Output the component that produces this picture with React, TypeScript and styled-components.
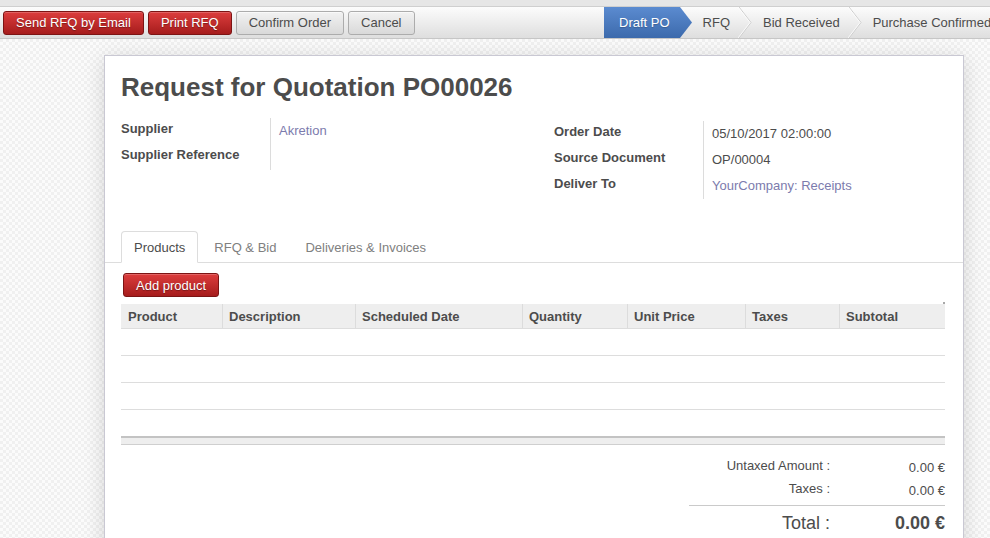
import React from "react";
import styled, { createGlobalStyle, css } from "styled-components";

const GlobalStyle = createGlobalStyle`
  html, body { margin: 0; padding: 0; }
  body {
    font-family: "Liberation Sans", Arial, sans-serif;
    font-size: 13px;
    color: #4c4c4c;
    background-color: #fbfbfb;
    background-image: conic-gradient(#f0f0f0 25%, transparent 0 50%, #f0f0f0 0 75%, transparent 0);
    background-size: 6px 6px;
    overflow: hidden;
  }
`;

const Page = styled.div`
  display: flex;
  flex-direction: column;
  width: 990px;
  height: 538px;
  overflow: hidden;
`;

const TopStrip = styled.div`
  height: 6px;
  flex-shrink: 0;
  background: #e6e6e6;
`;

const ActionBar = styled.div`
  display: flex;
  align-items: stretch;
  height: 31px;
  flex-shrink: 0;
  border-top: 1px solid #cfcfcf;
  border-bottom: 1px solid #c6c6c6;
  background: linear-gradient(#fcfcfc, #dedede);
  padding-left: 3px;
  overflow: hidden;
  white-space: nowrap;
`;

const ButtonGroup = styled.div`
  flex: 0 0 601px;
  display: flex;
  align-items: center;
  gap: 4px;
`;

const Button = styled.button<{ $primary?: boolean }>`
  height: 24px;
  padding: 0 12px;
  border-radius: 3px;
  font: 13px "Liberation Sans", Arial, sans-serif;
  cursor: pointer;
  white-space: nowrap;
  ${(p) =>
    p.$primary
      ? css`
          color: #fff;
          background: linear-gradient(#dc3d3d, #a61c1c);
          border: 1px solid #7c1414;
          text-shadow: 0 1px 1px rgba(0, 0, 0, 0.35);
          box-shadow: inset 0 1px 0 rgba(255, 255, 255, 0.2);
        `
      : css`
          color: #4c4c4c;
          background: linear-gradient(#f2f2f2, #d9d9d9);
          border: 1px solid #acacac;
          box-shadow: inset 0 1px 0 rgba(255, 255, 255, 0.6);
        `}
`;

const StatusBar = styled.div`
  display: flex;
  align-items: stretch;
  flex-shrink: 0;
  height: 31px;
`;

const ActiveStep = styled.div`
  display: flex;
  align-items: center;
  padding: 0 10px 0 15px;
  color: #fff;
  background: linear-gradient(#5b8bd0, #3c6aac);
  text-shadow: 0 1px 1px rgba(0, 0, 0, 0.2);
`;

const Step = styled.div`
  display: flex;
  align-items: center;
  padding: 0 8px 0 11px;
  color: #4c4c4c;
`;

const StepArrow = () => (
  <svg width="12" height="31" viewBox="0 0 12 31" style={{ display: "block" }}>
    <defs>
      <linearGradient id="actgrad" x1="0" y1="0" x2="0" y2="1">
        <stop offset="0" stopColor="#5b8bd0" />
        <stop offset="1" stopColor="#3c6aac" />
      </linearGradient>
    </defs>
    <polygon points="0,0 12,15.5 0,31" fill="url(#actgrad)" />
  </svg>
);

const Chevron = () => (
  <svg width="14" height="31" viewBox="0 0 14 31" style={{ display: "block" }}>
    <polyline points="1,0 13,15.5 1,31" fill="none" stroke="#cdcdcd" strokeWidth="1" />
    <polyline points="0,0 12,15.5 0,31" fill="none" stroke="#ffffff" strokeWidth="1" opacity="0.8" />
  </svg>
);

const SheetArea = styled.div`
  flex: 1;
  padding: 16px 0 0 104px;
`;

const Sheet = styled.div`
  width: 860px;
  box-sizing: border-box;
  background: #fff;
  border: 1px solid #c9c8d3;
  box-shadow: 0 4px 20px rgba(0, 0, 0, 0.15);
  padding: 16px 18px 40px 16px;
`;

const Title = styled.h1`
  margin: 0;
  font-size: 26px;
  line-height: 30px;
  font-weight: bold;
  color: #4c4c4c;
`;

const FieldsGrid = styled.div`
  display: grid;
  grid-template-columns: 433px 1fr;
  margin-top: 16px;
  align-items: start;
`;

const FieldGroup = styled.div<{ $offset: number }>`
  display: grid;
  grid-template-columns: 150px 1fr;
  grid-auto-rows: 26px;
  margin-top: ${(p) => p.$offset}px;
`;

const FieldLabel = styled.div`
  padding-top: 3px;
  line-height: 16px;
  font-weight: bold;
  border-right: 1px solid #dcdcdc;
`;

const FieldValue = styled.div<{ $link?: boolean }>`
  padding: 5px 0 0 8px;
  line-height: 16px;
  color: ${(p) => (p.$link ? "#7c7bad" : "#4c4c4c")};
`;

const TabNav = styled.div`
  display: flex;
  margin: 32px -18px 0 -16px;
  padding-left: 16px;
  border-bottom: 1px solid #dddddd;
`;

const Tab = styled.div<{ $active?: boolean }>`
  height: 30px;
  line-height: 31px;
  padding: 0 12px;
  margin: 0 3px -1px 0;
  border: 1px solid transparent;
  border-radius: 4px 4px 0 0;
  color: #808080;
  ${(p) =>
    p.$active &&
    css`
      color: #4c4c4c;
      background: #fff;
      border-color: #dddddd #dddddd transparent;
    `}
`;

const ListToolbar = styled.div`
  display: flex;
  padding: 10px 0 0 2px;
`;

const TableWrap = styled.div`
  position: relative;
  margin-top: 7px;
`;

const ResizeHandle = styled.span`
  position: absolute;
  top: -2px;
  right: 0;
  width: 2px;
  height: 2px;
  background: #a8a8a8;
`;

const COLS = "101px 133px 167px 105px 118px 94px 106px";

const HeaderRow = styled.div`
  display: grid;
  grid-template-columns: ${COLS};
  background: #eeeeee;
  border-bottom: 1px solid #dddddd;
`;

const HeaderCell = styled.div`
  height: 24px;
  line-height: 25px;
  padding-left: 6px;
  font-weight: bold;
  border-left: 1px solid #dcdcdc;
  overflow: hidden;
  &:first-child {
    border-left: none;
    padding-left: 7px;
  }
`;

const EmptyRow = styled.div<{ $last?: boolean }>`
  height: 26px;
  border-bottom: ${(p) => (p.$last ? "none" : "1px solid #dddddd")};
`;

const TableFooter = styled.div`
  height: 6px;
  background: #eeeeee;
  border-top: 2px solid #c3c3c3;
  border-bottom: 1px solid #cfcfcf;
`;

const TotalsWrap = styled.div`
  display: flex;
  justify-content: flex-end;
  margin-top: 13px;
`;

const TotalsGrid = styled.div`
  display: grid;
  grid-template-columns: 142px 114px;
  width: 256px;
`;

const TotalLabel = styled.div`
  height: 23px;
  line-height: 16px;
  text-align: right;
  padding-right: 1px;
`;

const TotalValue = styled.div`
  height: 23px;
  padding-top: 2px;
  box-sizing: border-box;
  line-height: 16px;
  text-align: right;
`;

const TotalsSeparator = styled.div`
  grid-column: 1 / -1;
  margin-top: 1px;
  border-top: 1px solid #cacaca;
`;

const GrandLabel = styled.div`
  padding: 6px 1px 0 0;
  font-size: 18px;
  line-height: 22px;
  text-align: right;
`;

const GrandValue = styled.div`
  padding-top: 6px;
  font-size: 18px;
  line-height: 22px;
  font-weight: bold;
  text-align: right;
`;

const headers = ["Product", "Description", "Scheduled Date", "Quantity", "Unit Price", "Taxes", "Subtotal"];

export default function App() {
  return (
    <>
      <GlobalStyle />
      <Page>
        <TopStrip />
        <ActionBar>
          <ButtonGroup>
            <Button $primary>Send RFQ by Email</Button>
            <Button $primary>Print RFQ</Button>
            <Button>Confirm Order</Button>
            <Button>Cancel</Button>
          </ButtonGroup>
          <StatusBar>
            <ActiveStep>Draft PO</ActiveStep>
            <StepArrow />
            <Step>RFQ</Step>
            <Chevron />
            <Step>Bid Received</Step>
            <Chevron />
            <Step>Purchase Confirmed</Step>
            <Chevron />
            <Step>Done</Step>
          </StatusBar>
        </ActionBar>
        <SheetArea>
          <Sheet>
            <Title>Request for Quotation PO00026</Title>
            <FieldsGrid>
              <FieldGroup $offset={0}>
                <FieldLabel>Supplier</FieldLabel>
                <FieldValue $link>Akretion</FieldValue>
                <FieldLabel>Supplier Reference</FieldLabel>
                <FieldValue />
              </FieldGroup>
              <FieldGroup $offset={3}>
                <FieldLabel>Order Date</FieldLabel>
                <FieldValue>05/10/2017 02:00:00</FieldValue>
                <FieldLabel>Source Document</FieldLabel>
                <FieldValue>OP/00004</FieldValue>
                <FieldLabel>Deliver To</FieldLabel>
                <FieldValue $link>YourCompany: Receipts</FieldValue>
              </FieldGroup>
            </FieldsGrid>
            <TabNav>
              <Tab $active>Products</Tab>
              <Tab>RFQ &amp; Bid</Tab>
              <Tab>Deliveries &amp; Invoices</Tab>
            </TabNav>
            <ListToolbar>
              <Button $primary>Add product</Button>
            </ListToolbar>
            <TableWrap>
              <ResizeHandle />
              <HeaderRow>
                {headers.map((h) => (
                  <HeaderCell key={h}>{h}</HeaderCell>
                ))}
              </HeaderRow>
              <EmptyRow />
              <EmptyRow />
              <EmptyRow />
              <EmptyRow $last />
              <TableFooter />
            </TableWrap>
            <TotalsWrap>
              <TotalsGrid>
                <TotalLabel>Untaxed Amount :</TotalLabel>
                <TotalValue>0.00 €</TotalValue>
                <TotalLabel>Taxes :</TotalLabel>
                <TotalValue>0.00 €</TotalValue>
                <TotalsSeparator />
                <GrandLabel>Total :</GrandLabel>
                <GrandValue>0.00 €</GrandValue>
              </TotalsGrid>
            </TotalsWrap>
          </Sheet>
        </SheetArea>
      </Page>
    </>
  );
}
